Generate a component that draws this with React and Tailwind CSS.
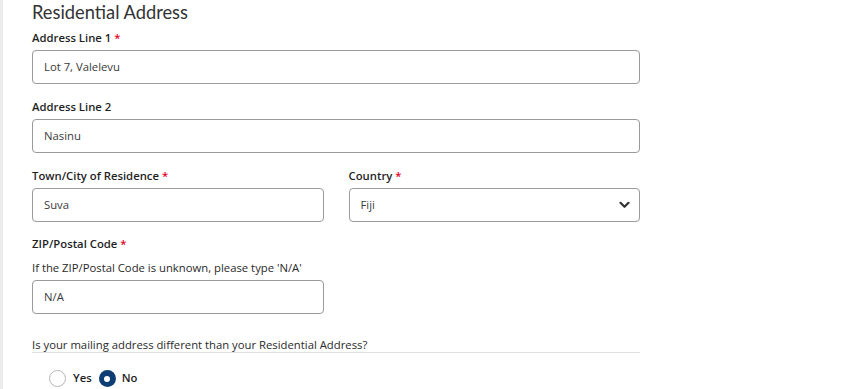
import React from "react";

const font = { fontFamily: '"Open Sans", "Noto Sans", sans-serif' };

function Label({ children, req }) {
  return (
    <div className="h-4 text-[11.3px] leading-4 font-semibold text-[#1f1f1f] mb-1">
      {children}
      {req && <span className="text-[#e4002b]"> *</span>}
    </div>
  );
}

function Input({ value, className = "" }) {
  return (
    <div className={`h-[34px] border border-[#9a9a9a] rounded-[4px] flex items-center pl-[11px] text-[11.3px] text-[#3a3a3a] ${className}`}>
      {value}
    </div>
  );
}

export default function App() {
  return (
    <div className="w-[865px] h-[389px] bg-white flex overflow-hidden" style={font}>
      <div className="w-[3px] bg-[#ececec] shrink-0" />
      <div className="pl-[29px] w-[637px] shrink-0">
        <div className="text-[18.3px] leading-6 text-[#333] mb-[6px]" style={{ fontFamily: '"Lato", "Open Sans", sans-serif', fontWeight: 400 }}>
          Residential Address
        </div>
        <div className="mb-[15px]">
          <Label req>Address Line 1</Label>
          <Input value="Lot 7, Valelevu" />
        </div>
        <div className="mb-[15px]">
          <Label>Address Line 2</Label>
          <Input value="Nasinu" />
        </div>
        <div className="grid grid-cols-2 gap-[25px] mb-[14px] w-[608px]">
          <div>
            <Label req>Town/City of Residence</Label>
            <Input value="Suva" />
          </div>
          <div>
            <Label req>Country</Label>
            <div className="h-[34px] border border-[#9a9a9a] rounded-[4px] flex items-center justify-between pl-[11px] pr-[9px] text-[11.3px] text-[#3a3a3a]">
              <span>Fiji</span>
              <svg width="11" height="8" viewBox="0 0 11 8">
                <path d="M1.5 1.8 L5.5 5.8 L9.5 1.8" fill="none" stroke="#333" strokeWidth="2.2" strokeLinecap="round" strokeLinejoin="round" />
              </svg>
            </div>
          </div>
        </div>
        <div>
          <Label req>ZIP/Postal Code</Label>
          <div className="h-4 text-[11.3px] leading-4 text-[#2a2a2a] mt-[8px] mb-[4px]">
            If the ZIP/Postal Code is unknown, please type 'N/A'
          </div>
          <Input value="N/A" className="w-[292px]" />
        </div>
        <div className="mt-[23px] w-[608px] border-b border-[#e0e0e0] h-[16px] text-[11.3px] leading-4 text-[#2a2a2a]">
          Is your mailing address different than your Residential Address?
        </div>
        <div className="flex items-center mt-[17px] pl-[17px] text-[11.3px] font-semibold text-[#1f1f1f]">
          <span className="w-[17px] h-[17px] rounded-full border border-[#b5b5b5] bg-white" />
          <span className="ml-[7px]">Yes</span>
          <span className="ml-[7px] w-[17px] h-[17px] rounded-full bg-[#0d3d73] flex items-center justify-center">
            <span className="w-[6px] h-[6px] rounded-full bg-white" />
          </span>
          <span className="ml-[6px]">No</span>
        </div>
      </div>
    </div>
  );
}
